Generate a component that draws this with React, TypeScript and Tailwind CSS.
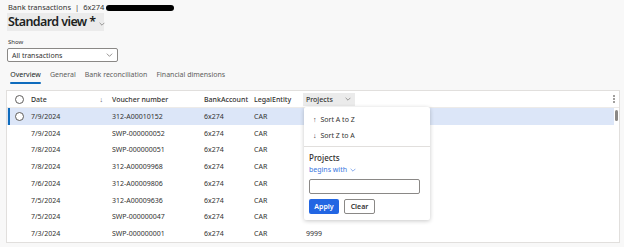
import React from 'react';

const rows = [
  { date: '7/9/2024', voucher: '312-A00010152', selected: true },
  { date: '7/9/2024', voucher: 'SWP-000000052' },
  { date: '7/8/2024', voucher: 'SWP-000000051' },
  { date: '7/8/2024', voucher: '312-A00009968' },
  { date: '7/6/2024', voucher: '312-A00009806' },
  { date: '7/5/2024', voucher: '312-A00009636' },
  { date: '7/5/2024', voucher: 'SWP-000000047' },
  { date: '7/3/2024', voucher: 'SWP-000000001', project: '9999' },
];

const Chevron: React.FC<{ className?: string }> = ({ className }) => (
  <svg viewBox="0 0 10 6" className={className} fill="none" stroke="currentColor" strokeWidth="1">
    <path d="M1 1l4 4 4-4" />
  </svg>
);

const Radio: React.FC = () => (
  <span className="block w-[9px] h-[9px] rounded-full border border-[#605e5c] bg-white" />
);

export default function App() {
  return (
    <div className="relative w-[624px] h-[247px] overflow-hidden bg-[#f8f8f8] text-[#323130] font-['Noto_Sans',sans-serif]">
      <div className="pl-[8px] pt-[3px]">
        {/* breadcrumb */}
        <div className="flex items-center h-[9px] text-[7.5px] leading-none whitespace-nowrap text-[#323130]">
          <span>Bank transactions</span>
          <span className="mx-[4px]">|</span>
          <span>6x274</span>
          <span className="ml-[2px] w-[68px] h-[6px] rounded-full bg-black" />
        </div>

        {/* view name */}
        <div className="mt-[1px] -ml-[1px] flex items-center w-[97px] h-[18px] bg-[#ebebeb] pl-[1px] whitespace-nowrap">
          <span className="text-[12.5px] font-semibold leading-none tracking-[-0.6px] text-[#201f1e]">Standard view *</span>
          <Chevron className="ml-[3px] mt-[3px] w-[6px] h-[4px] shrink-0 text-[#605e5c]" />
        </div>

        {/* show */}
        <div className="mt-[8px] text-[6px] leading-none text-[#323130]">Show</div>
        <div className="mt-[3px] -ml-[1px] flex items-center justify-between w-[111px] h-[14px] border border-[#8a8886] rounded-[2px] bg-white px-[4px]">
          <span className="text-[7px] leading-none">All transactions</span>
          <Chevron className="w-[7px] h-[4px] text-[#605e5c]" />
        </div>

        {/* tabs */}
        <div className="mt-[9px] flex items-start gap-[9px] text-[7px] leading-none whitespace-nowrap">
          <div className="flex flex-col items-center ml-[2px]">
            <span className="text-[#201f1e]">Overview</span>
            <span className="mt-[4px] w-[31px] h-[2px] rounded-full bg-[#0f6cbd]" />
          </div>
          <span className="text-[#605e5c]">General</span>
          <span className="text-[#605e5c]">Bank reconciliation</span>
          <span className="text-[#605e5c]">Financial dimensions</span>
        </div>
      </div>

      {/* grid card */}
      <div className="absolute left-[6px] top-[90px] w-[614px] h-[153px] bg-white border border-[#e1dfdd] text-[7px] leading-none whitespace-nowrap">
        {/* header */}
        <div className="flex items-center h-[17px] border-b border-[#edebe9] text-[#323130]">
          <div className="w-[24px] flex justify-center pl-[1px]"><Radio /></div>
          <div className="w-[81px] flex items-center justify-between pr-[9px] font-medium">
            <span>Date</span>
            <span className="text-[7px] text-[#605e5c]">↓</span>
          </div>
          <div className="w-[92px] font-medium">Voucher number</div>
          <div className="w-[50px] font-medium">BankAccount</div>
          <div className="w-[49px] font-medium">LegalEntity</div>
          <div className="w-[52px] h-[13px] flex items-center justify-between bg-[#ebebeb] pl-[3px] pr-[4px] font-medium">
            <span>Projects</span>
            <Chevron className="w-[6px] h-[4px] text-[#605e5c]" />
          </div>
          <div className="flex-1" />
          <div className="w-[6px] mr-[2px] flex flex-col items-center gap-[1px]">
            <span className="w-[2px] h-[2px] bg-[#a19f9d]" />
            <span className="w-[2px] h-[2px] bg-[#a19f9d]" />
            <span className="w-[2px] h-[2px] bg-[#a19f9d]" />
          </div>
        </div>

        {/* body */}
        <div className="flex">
          <div className="w-[607px]">
            {rows.map((r, i) => (
              <div
                key={i}
                className={`relative flex items-center h-[16.75px] ${r.selected ? 'bg-[#dce6f8]' : ''}`}
              >
                {r.selected && <span className="absolute left-[1px] top-0 h-full w-[2px] bg-[#0f6cbd]" />}
                <div className="w-[24px] flex justify-center pl-[1px]">{r.selected && <Radio />}</div>
                <div className="w-[81px]">{r.date}</div>
                <div className="w-[92px]">{r.voucher}</div>
                <div className="w-[50px]">6x274</div>
                <div className="w-[51px]">CAR</div>
                <div className="pl-[1px]">{r.project ?? ''}</div>
              </div>
            ))}
          </div>
          <div className="flex-1 flex justify-center pt-[2px]">
            <span className="w-[3px] h-[11px] rounded-full bg-[#8a8886]" />
          </div>
        </div>
      </div>

      {/* column filter popup */}
      <div className="absolute left-[304px] top-[107px] w-[126px] h-[113px] bg-white rounded-[2px] shadow-[0_1px_4px_rgba(0,0,0,0.22)] text-[7px] leading-none text-[#323130] whitespace-nowrap">
        <div className="pl-[9px] pt-[9px] flex flex-col gap-[9px]">
          <div className="flex items-center gap-[4px]"><span className="text-[7px]">↑</span><span>Sort A to Z</span></div>
          <div className="flex items-center gap-[4px]"><span className="text-[7px]">↓</span><span>Sort Z to A</span></div>
        </div>
        <div className="mt-[7px] h-px bg-[#e1dfdd]" />
        <div className="px-[5px] pt-[7px]">
          <div className="text-[8px] font-medium">Projects</div>
          <div className="mt-[4px] flex items-center gap-[3px] text-[#3a76e0]">
            <span>begins with</span>
            <Chevron className="w-[6px] h-[4px]" />
          </div>
          <div className="mt-[6px] w-[111px] h-[15px] border border-[#8a8886] rounded-[2px]" />
          <div className="mt-[5px] flex gap-[5px]">
            <button className="w-[30px] h-[15px] rounded-[2px] bg-[#2266e3] text-white text-[7px] font-semibold">Apply</button>
            <button className="w-[31px] h-[15px] rounded-[2px] border border-[#8a8886] bg-white text-[7px] font-semibold">Clear</button>
          </div>
        </div>
      </div>
    </div>
  );
}
